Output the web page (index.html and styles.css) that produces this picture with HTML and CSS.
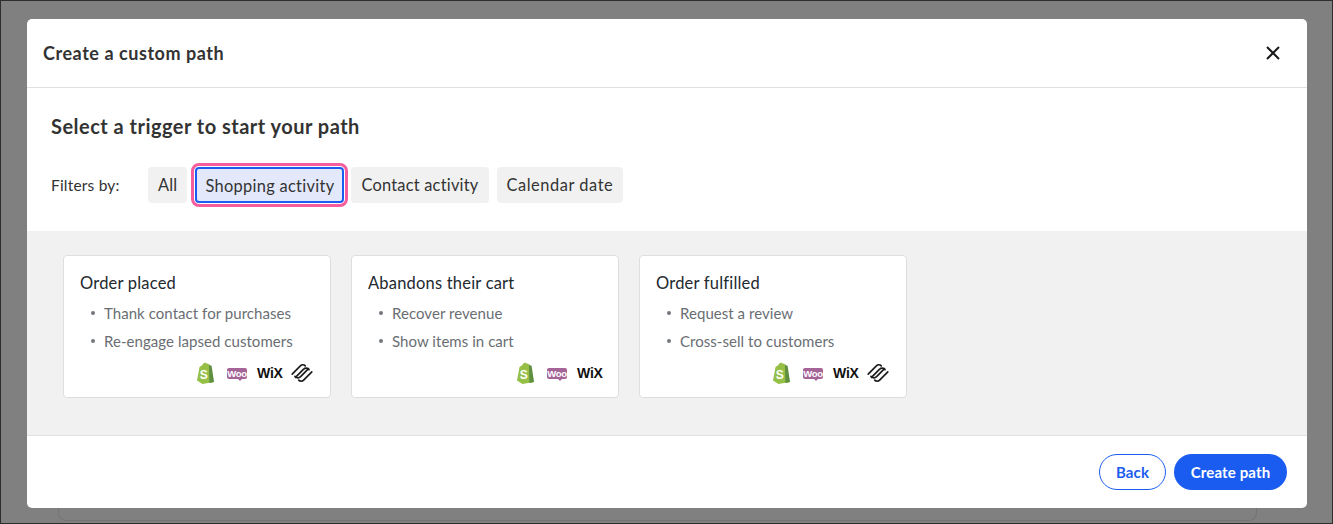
FILE: index.html
```html
<!DOCTYPE html>
<html lang="en">
<head>
    <meta charset="UTF-8">
    <meta name="viewport" content="width=device-width, initial-scale=1.0">
    <title>Create a custom path</title>
    <link rel="stylesheet" href="styles.css">
</head>
<body>
    <div class="page">
        <div class="ghost-card"></div>
    </div>

    <div class="modal">
        <div class="modal-header">
            <h1>Create a custom path</h1>
            <svg class="close-icon" viewBox="0 0 16 16" width="16" height="16">
                <path d="M2 2 L14 14 M14 2 L2 14" stroke="#1a1a1a" stroke-width="2" fill="none"/>
            </svg>
        </div>

        <div class="modal-intro">
            <h2>Select a trigger to start your path</h2>
            <div class="filters">
                <span class="filters-label">Filters by:</span>
                <button class="filter-button">All</button>
                <button class="filter-button selected">Shopping activity</button>
                <button class="filter-button">Contact activity</button>
                <button class="filter-button">Calendar date</button>
            </div>
        </div>

        <div class="trigger-section">
            <div class="trigger-card">
                <div class="trigger-title">Order placed</div>
                <ul class="trigger-list">
                    <li>Thank contact for purchases</li>
                    <li>Re-engage lapsed customers</li>
                </ul>
                <div class="logos">
                    <svg class="logo-shopify" viewBox="0 0 18 22" width="18" height="22">
                        <path d="M1 18.5 L3.6 4.8 C5 4.2 6 3.6 6.6 2.6 C7.6 0.6 9.6 0.4 10.8 1.6 L12.6 2 L14 3.4 L18 20 L6.5 22 Z" fill="#95bf47"/>
                        <path d="M13 2.4 L14.2 3.6 L15.6 3.8 L18 20 L13.4 21 Z" fill="#5e8e3e"/>
                        <text class="logo-s" x="7.8" y="16.5">S</text>
                    </svg>
                    <span class="logo-woo">Woo</span>
                    <span class="logo-wix">WiX</span>
                    <svg class="logo-square" viewBox="0 0 22 22" width="24" height="24">
                        <path d="M2 12 L9.5 4.5 A3 3 0 0 1 14 4.5 M5 15 L12.5 7.5 A3 3 0 0 1 17 7.5 L17.5 8 M17 7 L9.5 14.5 A3 3 0 0 1 5 14.5 L4.5 14 M20 10 L12.5 17.5 A3 3 0 0 1 8 17.5" stroke="#1a1a1a" stroke-width="1.5" stroke-linecap="round" fill="none"/>
                    </svg>
                </div>
            </div>

            <div class="trigger-card">
                <div class="trigger-title">Abandons their cart</div>
                <ul class="trigger-list">
                    <li>Recover revenue</li>
                    <li>Show items in cart</li>
                </ul>
                <div class="logos">
                    <svg class="logo-shopify" viewBox="0 0 18 22" width="18" height="22">
                        <path d="M1 18.5 L3.6 4.8 C5 4.2 6 3.6 6.6 2.6 C7.6 0.6 9.6 0.4 10.8 1.6 L12.6 2 L14 3.4 L18 20 L6.5 22 Z" fill="#95bf47"/>
                        <path d="M13 2.4 L14.2 3.6 L15.6 3.8 L18 20 L13.4 21 Z" fill="#5e8e3e"/>
                        <text class="logo-s" x="7.8" y="16.5">S</text>
                    </svg>
                    <span class="logo-woo">Woo</span>
                    <span class="logo-wix">WiX</span>
                </div>
            </div>

            <div class="trigger-card">
                <div class="trigger-title">Order fulfilled</div>
                <ul class="trigger-list">
                    <li>Request a review</li>
                    <li>Cross-sell to customers</li>
                </ul>
                <div class="logos">
                    <svg class="logo-shopify" viewBox="0 0 18 22" width="18" height="22">
                        <path d="M1 18.5 L3.6 4.8 C5 4.2 6 3.6 6.6 2.6 C7.6 0.6 9.6 0.4 10.8 1.6 L12.6 2 L14 3.4 L18 20 L6.5 22 Z" fill="#95bf47"/>
                        <path d="M13 2.4 L14.2 3.6 L15.6 3.8 L18 20 L13.4 21 Z" fill="#5e8e3e"/>
                        <text class="logo-s" x="7.8" y="16.5">S</text>
                    </svg>
                    <span class="logo-woo">Woo</span>
                    <span class="logo-wix">WiX</span>
                    <svg class="logo-square" viewBox="0 0 22 22" width="24" height="24">
                        <path d="M2 12 L9.5 4.5 A3 3 0 0 1 14 4.5 M5 15 L12.5 7.5 A3 3 0 0 1 17 7.5 L17.5 8 M17 7 L9.5 14.5 A3 3 0 0 1 5 14.5 L4.5 14 M20 10 L12.5 17.5 A3 3 0 0 1 8 17.5" stroke="#1a1a1a" stroke-width="1.5" stroke-linecap="round" fill="none"/>
                    </svg>
                </div>
            </div>
        </div>

        <div class="modal-footer">
            <button class="back-button">Back</button>
            <button class="create-button">Create path</button>
        </div>
    </div>
</body>
</html>
```

FILE: styles.css
```css
html, body {
    margin: 0;
    height: 100%;
    overflow: hidden;
}
body {
    font-family: "Lato", "Noto Sans", sans-serif;
    color: #333;
    background-color: #808080;
}
.page {
    box-sizing: border-box;
    height: 524px;
    border: 1px solid #2e2e2e;
    background: #808080;
    padding: 0 75px 2px 57px;
    display: flex;
    flex-direction: column;
    justify-content: flex-end;
}
.ghost-card {
    height: 40px;
    border: 1px solid #747474;
    border-top: none;
    border-radius: 0 0 8px 8px;
}
.modal {
    position: absolute;
    top: 19px;
    left: 27px;
    width: 1280px;
    height: 489px;
    background: white;
    border-radius: 5px;
    display: flex;
    flex-direction: column;
    overflow: hidden;
}
.modal-header {
    height: 69px;
    box-sizing: border-box;
    border-bottom: 1px solid #e0e0e0;
    padding: 0 26px 0 16px;
    display: flex;
    align-items: center;
    justify-content: space-between;
    flex-shrink: 0;
}
h1 {
    font-size: 18px;
    font-weight: 700;
    letter-spacing: 0.55px;
    margin: 0;
    color: #333;
}
.close-icon {
    display: block;
}
.modal-intro {
    height: 143px;
    box-sizing: border-box;
    padding: 26px 24px 0 24px;
    flex-shrink: 0;
}
h2 {
    font-size: 20px;
    line-height: 24px;
    font-weight: 700;
    letter-spacing: 0.48px;
    margin: 0 0 29px 0;
    color: #333;
}
.filters {
    display: flex;
    align-items: center;
    gap: 8px;
    height: 36px;
}
.filters-label {
    font-size: 15.5px;
    width: 89px;
    letter-spacing: 0.2px;
    padding-bottom: 1px;
}
.filter-button {
    font-family: inherit;
    height: 36px;
    box-sizing: border-box;
    padding: 0 10px 1px 10px;
    border: none;
    border-radius: 4px;
    background: #f1f1f1;
    color: #333;
    font-size: 16.4px;
    letter-spacing: 0.22px;
    white-space: nowrap;
}
.filter-button:last-child {
    letter-spacing: 0.55px;
}
.filter-button.selected {
    background: #e3e9fb;
    border: 2px solid #1b5cf0;
    outline: 3px solid #f55d9c;
    outline-offset: 1px;
    padding: 0 8px;
    letter-spacing: 0.3px;
    margin-right: -1px;
}
.trigger-section {
    flex: 1;
    background: #f1f1f1;
    padding: 24px 36px;
    display: flex;
    gap: 20px;
    align-items: flex-start;
}
.trigger-card {
    width: 268px;
    height: 143px;
    box-sizing: border-box;
    background: white;
    border: 1px solid #dedede;
    border-radius: 4px;
    padding: 16px 16px 0 16px;
    display: flex;
    flex-direction: column;
}
.trigger-title {
    font-size: 16.5px;
    line-height: 22px;
    color: #22292f;
    letter-spacing: 0.2px;
}
.trigger-list {
    margin: 5px 0 0 0;
    padding: 0 0 0 24px;
    font-size: 15px;
    line-height: 28px;
    color: #6a6e73;
    letter-spacing: 0.05px;
    list-style: none;
}
.trigger-list li {
    position: relative;
}
.trigger-list li::before {
    content: "";
    position: absolute;
    left: -13px;
    top: 12px;
    width: 4px;
    height: 4px;
    border-radius: 50%;
    background: #74787c;
}
.logos {
    margin-top: 6px;
    display: flex;
    justify-content: flex-end;
    align-items: center;
    gap: 10px;
    height: 24px;
}
.logo-shopify {
    margin-right: 3px;
}
.logo-s {
    font-family: "Liberation Sans", sans-serif;
    font-weight: 700;
    font-size: 12px;
    fill: white;
    text-anchor: middle;
}
.logo-woo {
    position: relative;
    background: #a46497;
    color: white;
    font-family: "Liberation Sans", sans-serif;
    font-size: 9.5px;
    font-weight: 700;
    line-height: 11px;
    width: 20px;
    height: 11px;
    border-radius: 2px;
    text-align: center;
    letter-spacing: -0.3px;
}
.logo-woo::after {
    content: "";
    position: absolute;
    left: 11px;
    top: 11px;
    border-top: 2px solid #a46497;
    border-left: 2px solid transparent;
    border-right: 2px solid transparent;
}
.logo-wix {
    font-family: "Liberation Sans", sans-serif;
    font-size: 14px;
    font-weight: 700;
    color: #111;
    width: 25px;
    letter-spacing: -0.2px;
}
.logo-square {
    margin-left: -2px;
    margin-right: 0;
}
.modal-footer {
    height: 73px;
    box-sizing: border-box;
    border-top: 1px solid #e0e0e0;
    padding: 18px 20px 0 0;
    display: flex;
    justify-content: flex-end;
    gap: 8px;
    flex-shrink: 0;
}
.back-button, .create-button {
    font-family: inherit;
    height: 36px;
    border-radius: 18px;
    font-size: 15px;
    font-weight: 700;
    box-sizing: border-box;
    letter-spacing: 0.15px;
    padding: 0 0 1px 0;
}
.back-button {
    width: 67px;
    background: white;
    color: #1b5cf0;
    border: 1px solid #1b5cf0;
}
.create-button {
    width: 113px;
    background: #1b5cf0;
    color: white;
    border: none;
}
```
